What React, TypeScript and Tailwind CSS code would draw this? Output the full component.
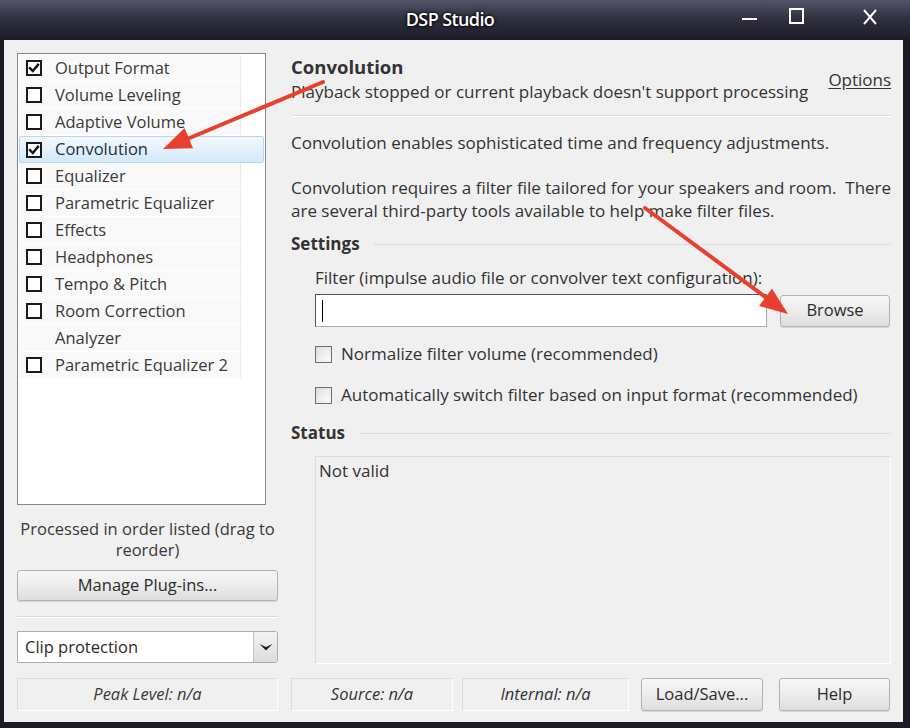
import React from "react";

const font = { fontFamily: '"Open Sans", "Noto Sans", sans-serif' };

function Check({ checked }: { checked?: boolean }) {
  return (
    <div className="w-[16px] h-[16px] border-2 border-[#1a1a1a] bg-white flex items-center justify-center shrink-0">
      {checked && (
        <svg width="12" height="12" viewBox="0 0 12 12">
          <path d="M2 6.2 L4.8 9 L10 2.8" stroke="#111" strokeWidth="2.4" fill="none" strokeLinecap="square" />
        </svg>
      )}
    </div>
  );
}

function WinCheck() {
  return (
    <div className="w-[17px] h-[17px] border border-[#6f6f6f] bg-gradient-to-br from-[#dcdcdc] to-[#f8f8f8] shrink-0 p-[2px]">
      <div className="w-full h-full bg-gradient-to-br from-[#e4e4e4] to-[#fafafa]" />
    </div>
  );
}

const items: { label: string; cb: boolean; checked?: boolean; sel?: boolean }[] = [
  { label: "Output Format", cb: true, checked: true },
  { label: "Volume Leveling", cb: true },
  { label: "Adaptive Volume", cb: true },
  { label: "Convolution", cb: true, checked: true, sel: true },
  { label: "Equalizer", cb: true },
  { label: "Parametric Equalizer", cb: true },
  { label: "Effects", cb: true },
  { label: "Headphones", cb: true },
  { label: "Tempo & Pitch", cb: true },
  { label: "Room Correction", cb: true },
  { label: "Analyzer", cb: false },
  { label: "Parametric Equalizer 2", cb: true },
];

function Btn({ children, className }: { children: React.ReactNode; className?: string }) {
  return (
    <div
      className={
        "flex items-center justify-center rounded-[3px] border border-[#b4b4b4] bg-gradient-to-b from-[#f7f7f7] via-[#ececec] to-[#dedede] shadow-[0_1px_1px_rgba(0,0,0,0.12)] text-[16.5px] text-[#2b2b2b] " +
        (className || "")
      }
    >
      {children}
    </div>
  );
}

export default function App() {
  return (
    <div className="w-[910px] h-[728px] bg-[#1c1c24] flex flex-col relative overflow-hidden" style={font}>
      {/* Title bar */}
      <div className="h-[40px] shrink-0 relative bg-gradient-to-b from-[#54546a] via-[#2e2e3e] to-[#1c1c28] flex items-center justify-center">
        <div className="text-white text-[18px] font-semibold tracking-[-0.6px] [text-shadow:0_0_4px_#000,0_0_2px_#000] mt-[-2px] ml-[-10px]">
          DSP Studio
        </div>
        <div className="absolute left-[742px] top-[18px] w-[15px] h-[2px] bg-white" />
        <div className="absolute left-[789px] top-[8px] w-[15px] h-[16px] border-2 border-white" />
        <svg className="absolute left-[862px] top-[9px]" width="16" height="16" viewBox="0 0 16 16">
          <path d="M2 1 L14 15 M14 1 L2 15" stroke="white" strokeWidth="2" />
        </svg>
      </div>

      {/* Content */}
      <div className="flex-1 ml-[4px] mr-[7px] mb-[6px] bg-[#f0f0f0] flex text-[#333] text-[17px]">
        {/* Left column */}
        <div className="w-[274px] shrink-0 pl-[13px] pt-[13px] pb-[11px] flex flex-col">
          <div className="w-[249px] h-[452px] border border-[#82868e] bg-white p-[1px] shrink-0">
            {items.map((it) =>
              it.sel ? (
                <div
                  key={it.label}
                  className="h-[27px] flex items-center pl-[6px] rounded-[2px] border border-[#b6d8f2] bg-gradient-to-b from-[#f4f9fe] to-[#d3e9fa]"
                >
                  <Check checked={it.checked} />
                  <span className="ml-[13px] text-[16.5px] text-[#1f2f44] leading-none">{it.label}</span>
                </div>
              ) : (
                <div
                  key={it.label}
                  className="h-[27px] w-[222px] flex items-center pl-[7px] bg-[#f9f9f9] border-r border-[#ececec] border-b border-b-white"
                >
                  {it.cb ? <Check checked={it.checked} /> : <div className="w-[16px]" />}
                  <span className="ml-[13px] text-[16.5px] text-[#3a3a3a] leading-none">{it.label}</span>
                </div>
              )
            )}
          </div>
          <div className="mt-[13px] text-center text-[#3a3a3a] text-[16.5px]">
            <div className="leading-[21px]">Processed in order listed (drag to</div>
            <div className="leading-[21px]">reorder)</div>
          </div>
          <Btn className="mt-[10px] h-[31px] w-[261px]">Manage Plug-ins...</Btn>
          <div className="mt-[15px] h-[2px] w-[261px] border-t border-[#dadada] border-b border-b-white" />
          <div className="mt-[13px] h-[32px] w-[261px] flex border border-[#abadb3] bg-white rounded-r-[3px]">
            <div className="flex-1 flex items-center pl-[7px] text-[16.5px] text-[#2b2b2b]">Clip protection</div>
            <div className="w-[24px] border-l border-[#c4c4c4] rounded-r-[2px] bg-gradient-to-b from-[#f3f3f3] to-[#dcdcdc] flex items-center justify-center">
              <svg width="14" height="8" viewBox="0 0 14 8">
                <path d="M0.5 1 L7 4 L13.5 1 L7 7.5 Z" fill="#1e1e1e" />
              </svg>
            </div>
          </div>
          <div className="mt-auto h-[33px] w-[261px] border border-[#dcdcdc] border-b-white border-r-white flex items-center justify-center italic text-[16.5px] text-[#3a3a3a]">
            Peak Level: n/a
          </div>
        </div>

        {/* Right column */}
        <div className="flex-1 pl-[13px] pr-[13px] pt-[15px] pb-[11px] flex flex-col">
          <div className="flex items-center justify-between">
            <div>
              <div className="text-[18.5px] font-bold leading-[24px] text-[#333]">Convolution</div>
              <div className="leading-[26px] text-[17px] text-[#333] whitespace-nowrap">
                Playback stopped or current playback doesn't support processing
              </div>
            </div>
            <div className="underline text-[17px] text-[#333] underline-offset-2">Options</div>
          </div>
          <div className="mt-[10px] h-[2px] border-t border-[#dcdcdc] border-b border-b-white" />
          <div className="mt-[14px] leading-[23px] whitespace-nowrap">
            Convolution enables sophisticated time and frequency adjustments.
          </div>
          <div className="mt-[22px] leading-[23px] whitespace-nowrap">
            Convolution requires a filter file tailored for your speakers and room.&nbsp; There
            <br />
            are several third-party tools available to help make filter files.
          </div>
          <div className="mt-[11px] flex items-center gap-[14px] h-[22px]">
            <span className="font-bold text-[17px] text-[#333]">Settings</span>
            <div className="flex-1 h-[1px] bg-[#dcdcdc]" />
          </div>
          <div className="pl-[24px]">
            <div className="mt-[12px] leading-[22px] whitespace-nowrap">
              Filter (impulse audio file or convolver text configuration):
            </div>
            <div className="mt-[5px] flex items-center">
              <div className="w-[452px] h-[33px] border border-[#555] border-r-[#aaa] border-b-[#aaa] bg-white flex items-center pl-[6px]">
                <div className="w-[1px] h-[22px] bg-black" />
              </div>
              <Btn className="ml-[13px] w-[110px] h-[32px]">Browse</Btn>
            </div>
            <div className="mt-[16px] flex items-center h-[22px]">
              <WinCheck />
              <span className="ml-[9px] whitespace-nowrap">Normalize filter volume (recommended)</span>
            </div>
            <div className="mt-[19px] flex items-center h-[22px]">
              <WinCheck />
              <span className="ml-[9px] whitespace-nowrap">
                Automatically switch filter based on input format (recommended)
              </span>
            </div>
          </div>
          <div className="mt-[16px] flex items-center gap-[14px] h-[22px]">
            <span className="font-bold text-[17px] text-[#333]">Status</span>
            <div className="flex-1 h-[1px] bg-[#dcdcdc]" />
          </div>
          <div className="ml-[24px] mt-[12px] flex-1 border border-[#dcdcdc] border-b-white border-r-white pl-[3px] pt-[1px]">
            Not valid
          </div>
          <div className="mt-[14px] h-[33px] flex items-center text-[16.5px]">
            <div className="w-[162px] h-[33px] border border-[#dcdcdc] border-b-white border-r-white flex items-center justify-center italic">
              Source: n/a
            </div>
            <div className="ml-[9px] w-[167px] h-[33px] border border-[#dcdcdc] border-b-white border-r-white flex items-center justify-center italic">
              Internal: n/a
            </div>
            <Btn className="ml-[12px] w-[122px] h-[33px]">Load/Save...</Btn>
            <Btn className="ml-[16px] w-[111px] h-[33px]">Help</Btn>
          </div>
        </div>
      </div>

      {/* Annotation arrows */}
      <svg className="absolute left-0 top-0 pointer-events-none" width="910" height="728" viewBox="0 0 910 728">
        <line x1="323" y1="82" x2="186" y2="139.5" stroke="#e8402e" strokeWidth="4" strokeLinecap="round" />
        <polygon points="163,149 184.6,128.1 193,148.3" fill="#e8402e" />
        <line x1="645" y1="208" x2="768" y2="299" stroke="#e8402e" strokeWidth="4" strokeLinecap="round" />
        <polygon points="788,314 759,306 772,288.5" fill="#e8402e" />
      </svg>
    </div>
  );
}
